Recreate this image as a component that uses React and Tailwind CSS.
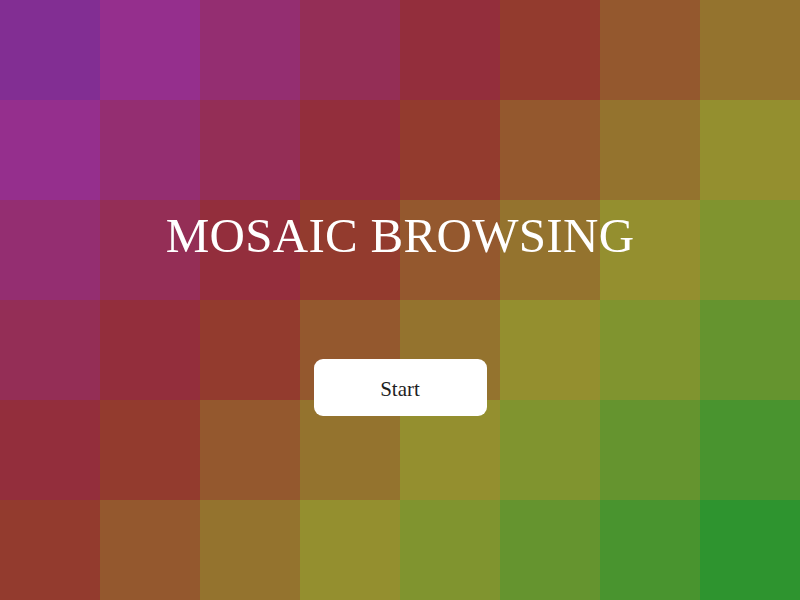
import React from "react";

// hue runs from purple (290) to green (120) along the diagonal, hsl(h, 52%, 38%)
const tileColors = [
  "bg-[#822e93]",
  "bg-[#952f8d]",
  "bg-[#942e71]",
  "bg-[#942e56]",
  "bg-[#932e3c]",
  "bg-[#933b2e]",
  "bg-[#94582e]",
  "bg-[#94732e]",
  "bg-[#948f2f]",
  "bg-[#80942f]",
  "bg-[#65942f]",
  "bg-[#49942f]",
  "bg-[#2e942f]",
];

const COLS = 8;
const ROWS = 6;

const App = () => {
  const tiles = [];
  for (let r = 0; r < ROWS; r++) {
    for (let c = 0; c < COLS; c++) {
      tiles.push(<div key={`${r}-${c}`} className={tileColors[r + c]} />);
    }
  }

  return (
    <div className="relative w-full h-screen overflow-hidden font-['Liberation_Serif','Times_New_Roman',serif]">
      {/* --- Mosaic background --- */}
      <div className="grid grid-cols-8 grid-rows-6 w-full h-full">{tiles}</div>

      {/* --- Title + start --- */}
      <div className="absolute inset-0 flex flex-col items-center pt-[211px]">
        <h1 className="text-white text-[49px] leading-none tracking-[0.3px]">
          MOSAIC BROWSING
        </h1>
        <button className="mt-[99px] w-[173px] h-[57px] pt-[5px] bg-white rounded-[9px] text-[21px] text-[#1f1f1f]">
          Start
        </button>
      </div>
    </div>
  );
};

export default App;
